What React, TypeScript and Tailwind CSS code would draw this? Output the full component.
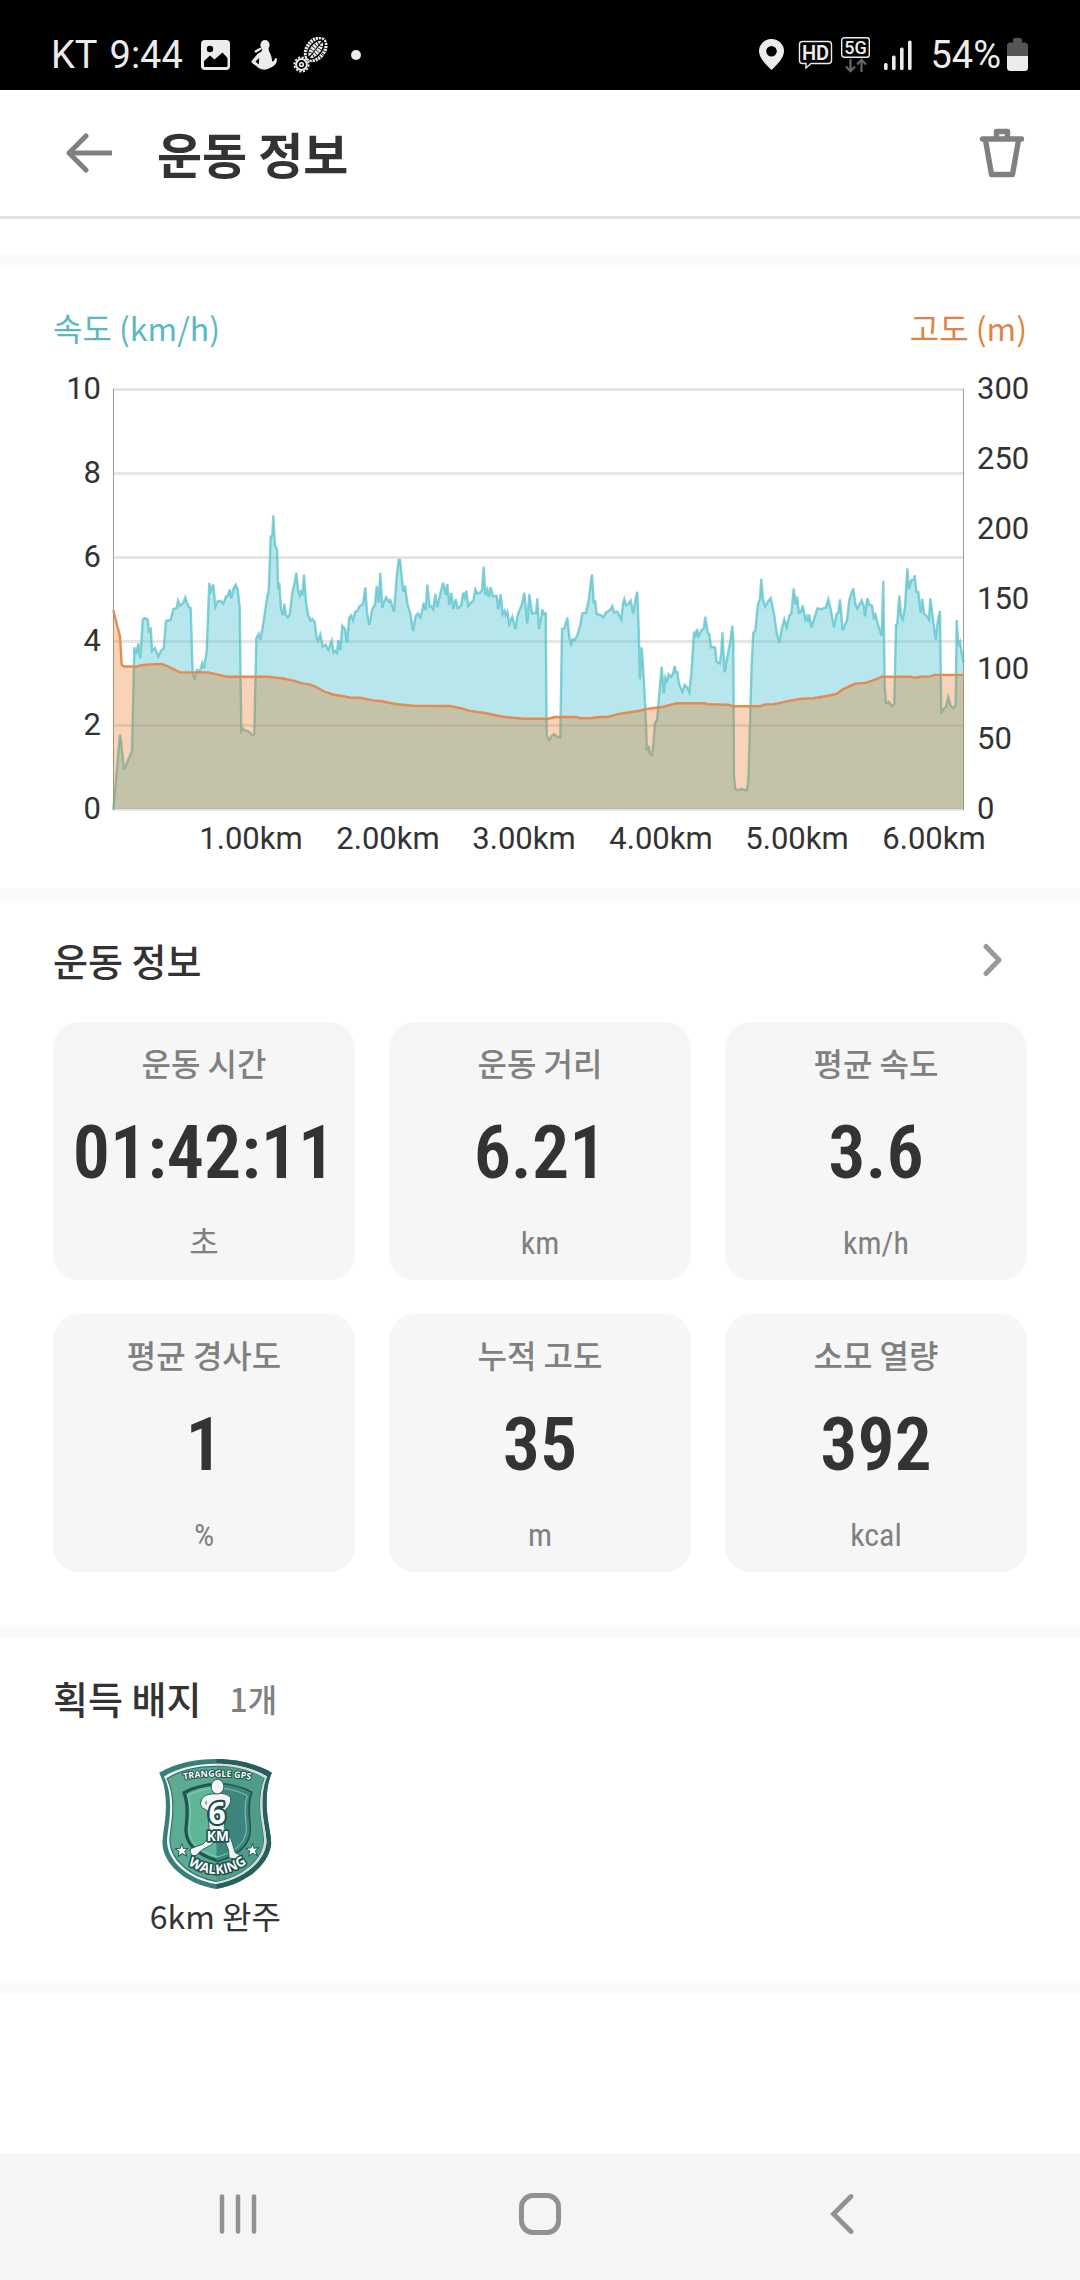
import React from "react";

type Run = { x: number; y: number; sx: number; sy: number; points: number[] };

const PLOT = { left: 113, right: 964, top: 389, bottom: 809 };

const speedRuns: Run[] = [
  {
    x: 40, y: 300, sx: 3, sy: 2.75,
    points: [
      220, 1402, 240, 1195, 244, 1220, 252, 1292, 276, 1240, 283, 955, 288, 975, 295, 945, 301, 985, 308, 880, 313, 875, 323, 878,
      327, 915, 332, 900, 336, 965, 345, 957, 355, 980, 362, 965, 371, 958, 378, 882, 392, 880, 400, 850, 410, 847, 414, 827,
      420, 840, 430, 833, 436, 818, 442, 835, 447, 845, 452, 847, 458, 1030, 464, 1040, 470, 1018, 480, 1020, 487, 998, 492, 1013,
      500, 965, 508, 778, 513, 800, 520, 782, 526, 843, 533, 828, 542, 827, 550, 835, 558, 815, 564, 812, 569, 796, 574, 820,
      580, 795, 587, 783, 593, 797, 599, 845, 604, 1185, 609, 1178, 614, 1184, 625, 1186, 638, 1197, 643, 1192, 649, 930, 656, 918,
      661, 935, 668, 900, 682, 815, 686, 800, 692, 650, 697, 648, 700, 592, 705, 675, 711, 685, 715, 795, 718, 778, 723, 850,
      729, 867, 733, 835, 738, 867, 743, 872, 749, 865, 757, 805, 765, 772, 769, 750, 775, 800, 779, 812, 784, 798, 787, 813,
      792, 755, 798, 830, 804, 865, 811, 882, 817, 877, 824, 885, 830, 930, 834, 936, 841, 920, 848, 953, 857, 948, 865, 962,
      875, 937, 881, 970, 887, 965, 891, 970, 895, 935, 901, 963, 907, 896, 915, 905, 921, 942, 928, 873, 934, 867, 939, 880,
      946, 857, 952, 855, 958, 843, 969, 835, 976, 790, 981, 860, 988, 893, 997, 850, 1005, 838, 1010, 786, 1016, 832,
    ],
  },
  {
    x: 380, y: 480, sx: 3, sy: 3,
    points: [
      1, 278, 7, 383, 14, 360, 19, 352, 26, 365, 31, 360, 42, 395, 50, 290, 56, 240, 60, 240, 70, 335, 75, 317, 82, 370, 92, 405,
      99, 453, 107, 408, 114, 400, 121, 412, 127, 390, 131, 368, 137, 390, 142, 314, 149, 380, 154, 378, 160, 388, 166, 342,
      172, 382, 182, 335, 190, 308, 197, 345, 202, 312, 208, 375, 214, 338, 220, 387, 227, 358, 233, 384, 243, 378, 250, 338,
      254, 352, 259, 332, 265, 378, 272, 368, 280, 363, 286, 328, 292, 340, 300, 338, 306, 330, 311, 260, 316, 345, 322, 328,
      326, 350, 332, 322, 338, 348, 350, 348, 355, 387, 362, 343, 368, 402, 374, 392, 377, 405, 382, 395, 388, 432, 397, 410,
      406, 447, 413, 405, 425, 375, 433, 338, 442, 430, 448, 342, 456, 400, 468, 398, 472, 355, 477, 447, 483, 415, 487, 388,
      491, 402, 497, 400, 500, 765, 508, 780, 515, 768, 522, 763, 530, 770, 541, 772, 546, 447, 553, 445, 562, 413, 568, 470,
      573, 492, 578, 478, 584, 480, 592, 465, 601, 435, 607, 400, 618, 398, 626, 360, 632, 310, 636, 283, 641, 370, 645, 360,
      650, 402, 662, 405, 670, 412, 677, 398, 690, 390, 697, 378, 702, 397, 712, 395, 724, 418, 729, 370, 733, 357, 738, 375,
      745, 372, 752, 362, 760, 400, 767, 355, 772, 335, 776, 450, 780, 598, 785, 502, 791, 590, 796, 680, 801, 812, 806, 797,
      810, 822, 816, 825, 820, 795, 825, 728, 831, 720, 838, 640, 845, 560, 851, 640, 856, 592, 861, 602, 866, 583, 873, 590,
      879, 582, 884, 558, 888, 577, 892, 577, 897, 612, 907, 635, 914, 615, 921, 622, 928, 637, 934, 580, 942, 455, 946, 473,
      951, 447, 956, 468, 965, 450, 971, 445, 976, 410, 983, 458, 988, 462, 993, 502, 1005, 502, 1010, 545, 1019, 550,
      1024, 520, 1027, 457, 1034, 577, 1042, 530, 1050, 490, 1057, 437, 1060, 480,
    ],
  },
  {
    x: 700, y: 300, sx: 3, sy: 2.75,
    points: [
      102, 1310, 106, 1345, 114, 1348, 122, 1345, 130, 1346, 140, 1348, 145, 1325, 155, 1000, 160, 915, 166, 910, 173, 840,
      180, 820, 184, 767, 189, 825, 196, 843, 203, 830, 212, 820, 222, 862, 230, 915, 238, 943, 245, 905, 253, 878, 260, 900,
      268, 868, 274, 862, 281, 793, 287, 838, 291, 815, 297, 860, 302, 858, 308, 840, 316, 878, 320, 870, 324, 885, 328, 865,
      334, 900, 342, 878, 352, 848, 365, 850, 378, 845, 385, 823, 392, 850, 402, 900, 410, 862, 415, 860, 420, 823, 428, 908,
      441, 880, 448, 825, 454, 808, 460, 793, 466, 835, 472, 848, 485, 826, 492, 843, 495, 870, 502, 820, 508, 838, 516, 840,
      522, 878, 525, 860, 532, 885, 538, 905, 545, 923, 550, 772, 554, 1060, 558, 1108, 567, 1105, 575, 1117, 583, 1112,
      588, 893, 592, 890, 598, 813, 603, 868, 608, 878, 615, 845, 622, 738, 627, 795, 634, 770, 641, 770, 644, 757, 649, 802,
      655, 803, 662, 860, 667, 822, 672, 862, 683, 872, 687, 878, 691, 820, 698, 870, 707, 935, 713, 885, 720, 855, 724, 1137,
      730, 1125, 738, 1118, 745, 1092, 752, 1115, 760, 1122, 767, 1115, 770, 880, 775, 952, 780, 940, 786, 975, 791, 998,
    ],
  },
];

const elevationRuns: Run[] = [
  {
    x: 40, y: 300, sx: 3, sy: 2.75,
    points: [
      220, 853, 240, 925, 245, 1003, 252, 1008, 290, 1008, 305, 1004, 330, 1002, 365, 1001, 385, 1008, 420, 1024, 505, 1024,
      560, 1036, 685, 1036, 730, 1041, 760, 1047, 790, 1055, 810, 1057, 830, 1065, 855, 1078, 880, 1085, 930, 1093, 960, 1094,
      1000, 1101,
    ],
  },
  {
    x: 380, y: 480, sx: 3, sy: 3,
    points: [
      0, 663, 50, 673, 100, 677, 210, 678, 245, 685, 275, 694, 310, 698, 370, 710, 430, 716, 505, 716, 525, 711, 590, 711,
      600, 715, 630, 715, 660, 711, 685, 710, 720, 701, 770, 694, 800, 687, 850, 680, 890, 670, 975, 670, 985, 673, 1045, 674,
    ],
  },
  {
    x: 700, y: 300, sx: 3, sy: 2.75,
    points: [
      100, 1117, 180, 1117, 195, 1112, 220, 1112, 270, 1102, 300, 1097, 340, 1095, 380, 1089, 410, 1083, 430, 1070, 465, 1055,
      495, 1053, 520, 1046, 545, 1036, 630, 1036, 645, 1039, 665, 1036, 690, 1035, 705, 1031, 792, 1031,
    ],
  },
];

function toLine(runs: Run[]) {
  const out: string[] = [];
  for (const r of runs) {
    for (let i = 0; i < r.points.length; i += 2) {
      out.push(`${(r.x + r.points[i] / r.sx).toFixed(1)} ${(r.y + r.points[i + 1] / r.sy).toFixed(1)}`);
    }
  }
  return "M" + out.join("L");
}

const speedLine = toLine(speedRuns);
const elevationLine = toLine(elevationRuns);
const closeArea = `L${PLOT.right} ${PLOT.bottom}L${PLOT.left} ${PLOT.bottom}Z`;

const speedTicks = [10, 8, 6, 4, 2, 0];
const elevationTicks = [300, 250, 200, 150, 100, 50, 0];
const distanceTicks = ["1.00km", "2.00km", "3.00km", "4.00km", "5.00km", "6.00km"];

function Chart() {
  return (
    <svg viewBox="0 354 1080 508" className="block w-full font-['Roboto',sans-serif]" role="img" aria-label="속도와 고도 그래프">
      {speedTicks.map((t) => (
        <rect key={t} x={PLOT.left} y={PLOT.bottom - t * 42 - 1} width={PLOT.right - PLOT.left} height="3" fill="#e5e5e5" />
      ))}
      <rect x="113" y="389" width="1" height="421" fill="#9c9c9c" />
      <rect x="963" y="389" width="1" height="421" fill="#9c9c9c" />
      <path d={speedLine + closeArea} fill="#5fcad5" fillOpacity=".45" />
      <path d={speedLine} fill="none" stroke="#4fbfc8" strokeOpacity=".7" strokeWidth="2.4" />
      <path d={elevationLine + closeArea} fill="#e86c12" fillOpacity=".3" />
      <path d={elevationLine} fill="none" stroke="#e5874a" strokeOpacity=".95" strokeWidth="2.4" />
      <g fill="#333333" fontSize="31">
        {speedTicks.map((t) => (
          <text key={t} x="101" y={PLOT.bottom - t * 42 + 10} textAnchor="end">{t}</text>
        ))}
        {elevationTicks.map((t) => (
          <text key={t} x="977" y={PLOT.bottom - (t / 50) * 70 + 10}>{t}</text>
        ))}
        {distanceTicks.map((t, i) => (
          <text key={t} x={251 + Math.round(i * 136.6)} y="849" textAnchor="middle">{t}</text>
        ))}
      </g>
    </svg>
  );
}

function StatusBar() {
  return (
    <div className="flex h-[90px] shrink-0 items-center justify-between bg-black pt-[19px] pr-[52px] pl-[51px] font-['Roboto',sans-serif] text-[38px] leading-none text-[#ececec]">
      <div className="flex items-center">
        <span className="mr-3">KT</span>
        <span className="mr-[18px]">9:44</span>
        <svg className="mr-5 h-[30px] w-[30px]" viewBox="0 0 30 30" aria-hidden="true">
          <rect x="0" y="0" width="29" height="30" rx="4" fill="#ececec" />
          <circle cx="9" cy="9" r="3.2" fill="#000" />
          <path d="M3 26V21L9 15.5L13.5 19.5L21.500 12.500L26.500 18V26Q26.500 27 25.500 27H4Q3 27 3 26Z" fill="#000" />
        </svg>
        <svg className="mr-4 h-[30px] w-[26px]" viewBox="0 0 26 30" fill="#ececec" aria-hidden="true">
          <ellipse cx="14" cy="5" rx="4.600" ry="5" />
          <path d="M3.500 11Q6 8.500 10 7.500L11 9L5 12.800Q3.500 12.800 3.500 11Z" />
          <path d="M11.500 8H17.500Q17.500 11 19 13Q21 17 21.200 21.500Q23.500 21 24 18.500Q25 17.500 26 19Q26 25 20 27.500Q14 31.500 7.500 28Q6 26 3 24.500Q0 23 0.500 21L7 13.500Q11.500 12 11.500 8Z" />
          <path d="M4.500 21.500L8.200 18L7.800 24.500Z" fill="#000" />
        </svg>
        <svg className="mr-[22px] h-9 w-9" viewBox="0 0 36 36" fill="none" stroke="#ececec" aria-hidden="true">
          <g transform="rotate(38 23 12)">
            <ellipse cx="23" cy="12.500" rx="10.500" ry="14" fill="#ececec" stroke="none" />
            <ellipse cx="23" cy="12.500" rx="6" ry="11" stroke="#000" strokeWidth="1.600" />
            <ellipse cx="23" cy="12.500" rx="9" ry="12.500" stroke="#000" strokeWidth="4" strokeDasharray=".8 2.200" />
            <ellipse cx="23" cy="12.500" rx="3" ry="8" stroke="#000" strokeWidth="4" strokeDasharray=".7 2.300" />
            <path d="M23 2V23" stroke="#000" strokeWidth="1" />
          </g>
          <circle cx="8.500" cy="27.500" r="5.400" fill="#000" strokeWidth="2" />
          <circle cx="8.500" cy="27.500" r="7.200" strokeWidth="1.800" strokeDasharray="2.200 1.570" />
          <circle cx="8.500" cy="27.500" r="2.600" fill="#ececec" stroke="none" />
          <circle cx="8.500" cy="27.500" r="1" fill="#000" stroke="none" />
        </svg>
        <span className="h-[10px] w-[10px] rounded-full bg-[#ececec]" />
      </div>
      <div className="flex items-center">
        <svg className="mr-3.5 h-[31px] w-[25px]" viewBox="0 0 25 31" aria-hidden="true">
          <path d="M12.500 0A12.300 12.300 0 0 1 25 12.300C25 19 18 26 12.500 31C7 26 0 19 0 12.300A12.300 12.300 0 0 1 12.500 0ZM12.500 7A5.300 5.300 0 1 0 12.500 17.600A5.300 5.300 0 1 0 12.500 7Z" fill="#ececec" />
        </svg>
        <svg className="mr-2 h-[30px] w-[35px]" viewBox="0 0 35 30" aria-hidden="true">
          <path d="M4.500 1.500H30.500Q33.500 1.500 33.500 4.500V20.500Q33.500 23.500 30.500 23.500H13L8 28V23.500H4.500Q1.500 23.500 1.500 20.500V4.500Q1.500 1.500 4.500 1.500Z" fill="none" stroke="#ececec" strokeWidth="1.400" />
          <text x="17.500" y="19.500" textAnchor="middle" fontSize="20" fontWeight="600" fill="#ececec">HD</text>
        </svg>
        <svg className="mr-3.5 h-[36px] w-[29px]" viewBox="0 0 29 36" aria-hidden="true">
          <rect x="0.700" y="0.700" width="27.600" height="19.600" rx="2.500" fill="none" stroke="#ececec" strokeWidth="1.400" />
          <text x="14.500" y="17" textAnchor="middle" fontSize="18" fontWeight="500" fill="#ececec">5G</text>
          <path d="M9.500 22V34M5 29.500L9.500 34.200L14 29.500M20.500 35V23M16 27.500L20.500 22.800L25 27.500" fill="none" stroke="#666" strokeWidth="2.200" />
        </svg>
        <svg className="mr-[18px] h-[30px] w-[28px]" viewBox="0 0 28 30" fill="#ececec" aria-hidden="true">
          <rect x="0" y="23" width="3.600" height="7" rx="1.500" />
          <rect x="8" y="15.500" width="3.600" height="14.500" rx="1.500" />
          <rect x="16" y="7.500" width="3.600" height="22.500" rx="1.500" />
          <rect x="24" y="0.500" width="3.600" height="29.500" rx="1.500" />
        </svg>
        <span className="mr-1.5">54%</span>
        <svg className="h-[33px] w-[21px]" viewBox="0 0 21 33" aria-hidden="true">
          <path d="M0 18V8Q0 4.500 3.500 4.500H6V2Q6 0 8 0H13Q15 0 15 2V4.500H17.500Q21 4.500 21 8V18Z" fill="#555" />
          <path d="M0 18H21V29.500Q21 33 17.500 33H3.500Q0 33 0 29.500Z" fill="#ececec" />
        </svg>
      </div>
    </div>
  );
}

function Badge() {
  return (
    <svg viewBox="80 57 338 390" className="h-[130px] w-[113px] font-['Open_Sans',sans-serif]" role="img" aria-label="TRANGGLE GPS 6KM WALKING">
      <defs>
        <path id="shield" d="M250 57C310 57 370 70 418 98C404 130 401 165 403 205C405 250 416 280 416 312C410 372 345 430 250 447C155 430 94 372 90 312C90 280 99 250 100 205C101 165 96 130 80 98C128 70 190 57 250 57Z" />
        <path id="inner-shield" d="M255 133C290 133 325 142 355 158C345 185 346 215 350 250C355 290 345 335 255 362C165 335 155 290 162 250C166 215 165 185 155 158C185 142 220 133 255 133Z" />
        <clipPath id="right-half"><rect x="252" y="50" width="180" height="400" /></clipPath>
        <path id="top-arc" d="M150 120Q254 100 358 120" />
        <path id="bottom-arc" d="M156 366Q254 440 354 362" />
      </defs>
      <use href="#shield" fill="#397f79" />
      <use href="#shield" fill="#265f5e" clipPath="url(#right-half)" />
      <g transform="translate(250 250) scale(.915 .925) translate(-250 -250)">
        <use href="#shield" fill="#f2f7f5" />
        <use href="#shield" fill="#d3dcda" clipPath="url(#right-half)" />
      </g>
      <g transform="translate(250 250) scale(.86 .885) translate(-250 -250)">
        <use href="#shield" fill="#5dac91" stroke="#2f6f6a" strokeWidth="4" />
        <use href="#shield" fill="#4f9d88" clipPath="url(#right-half)" />
      </g>
      <use href="#inner-shield" fill="#5fb697" stroke="#215552" strokeWidth="10" />
      <use href="#inner-shield" fill="#3d867d" clipPath="url(#right-half)" />
      <use href="#inner-shield" fill="none" stroke="#8ed0b6" strokeWidth="3" transform="translate(255 250) scale(.9) translate(-255 -250)" />
      <g fill="#f1f5f4" stroke="#2b625f" strokeWidth="3" strokeLinejoin="round">
        <path d="M236 162Q215 165 209 175L203 192Q205 204 224 212L230 262L226 296L212 312L174 326Q170 338 180 348L192 346Q200 332 236 315L258 284L276 300L288 330L290 354Q308 360 328 354L330 348L308 338L296 298L275 262L280 208Q298 190 294 172Q285 162 268 160Z" />
        <path d="M222 180L216 190L224 196Z" fill="#5fb697" stroke="none" />
        <ellipse cx="255" cy="140" rx="19" ry="22" />
      </g>
      <g fontWeight="700" fill="#fff" stroke="#1d4f4d" strokeLinejoin="round" paintOrder="stroke" textAnchor="middle">
        <text x="254" y="252" fontSize="90" strokeWidth="13">6</text>
        <text x="256" y="303" fontSize="41" strokeWidth="10">KM</text>
        <text fontSize="27" strokeWidth="6"><textPath href="#top-arc" startOffset="50%">TRANGGLE GPS</textPath></text>
        <text fontSize="40" strokeWidth="9"><textPath href="#bottom-arc" startOffset="50%">WALKING</textPath></text>
      </g>
      <g fill="#fff" stroke="#1d4f4d" strokeWidth="5" paintOrder="stroke">
        <path id="star" d="M148 316L152 327L163 326L155 334L160 345L149 339L139 346L141 334L132 327L144 326Z" />
        <use href="#star" transform="translate(212 -1)" />
      </g>
    </svg>
  );
}

const stats = [
  { label: "운동 시간", value: "01:42:11", unit: "초" },
  { label: "운동 거리", value: "6.21", unit: "km" },
  { label: "평균 속도", value: "3.6", unit: "km/h" },
  { label: "평균 경사도", value: "1", unit: "%" },
  { label: "누적 고도", value: "35", unit: "m" },
  { label: "소모 열량", value: "392", unit: "kcal" },
];

function Divider() {
  return <div className="h-[13px] shrink-0 bg-[#fafafa]" />;
}

export default function App() {
  return (
    <div className="flex min-h-screen flex-col bg-white font-['Noto_Sans_CJK_KR',sans-serif] text-[#333333]">
      <StatusBar />

      <header className="flex h-[129px] shrink-0 items-center border-b-[3px] border-[#e2e2e2] pr-[55px] pl-[66px]">
        <button type="button" aria-label="뒤로">
          <svg className="block h-[40px] w-[47px]" viewBox="0 0 47 40" fill="none" stroke="#808080" strokeWidth="5" strokeLinecap="round" strokeLinejoin="round">
            <path d="M20 3L3 20L20 37" />
            <path d="M3 20H46" strokeLinecap="butt" />
          </svg>
        </button>
        <h1 className="ml-11 flex-1 text-[49px] leading-[64px] font-bold">운동 정보</h1>
        <button type="button" aria-label="삭제">
          <svg className="block h-[50px] w-[46px]" viewBox="0 0 46 50" fill="none" stroke="#808080" strokeWidth="5.400" strokeLinecap="round" strokeLinejoin="round">
            <path d="M3.500 11H42.500M17.500 10V3.500H28.500V10M6.500 12L12.500 46.500H33.500L39.500 12" />
          </svg>
        </button>
      </header>

      <div className="h-[35px] shrink-0" />
      <Divider />

      <section className="pt-9 pb-[26px]">
        <div className="flex justify-between px-[53px] pb-[3px] text-[32px] leading-[48px]">
          <span className="text-[#5bb8c1]">속도 (km/h)</span>
          <span className="text-[#e08445]">고도 (m)</span>
        </div>
        <Chart />
      </section>
      <Divider />

      <section className="px-[53px] pt-[31px] pb-[53px]">
        <div className="flex items-center justify-between pr-[24px]">
          <h2 className="text-[38px] leading-[56px] font-medium">운동 정보</h2>
          <button type="button" aria-label="운동 정보 더보기">
            <svg className="block h-[34px] w-[21px]" viewBox="0 0 21 34" fill="none" stroke="#999999" strokeWidth="5" strokeLinecap="round" strokeLinejoin="round">
              <path d="M4 3.500L17 17L4 30.500" />
            </svg>
          </button>
        </div>
        <dl className="mt-[34px] grid grid-cols-3 gap-[34px]">
          {stats.map((s) => (
            <div key={s.label} className="flex flex-col items-center rounded-[26px] bg-[#f6f6f6] pt-5 pb-[17px] font-['Roboto_Condensed','Noto_Sans_CJK_KR',sans-serif] text-[32px] leading-[40px] text-[#808080]">
              <dt className="font-['Noto_Sans_CJK_KR',sans-serif] font-medium">{s.label}</dt>
              <dd className="mt-[35px] text-[74px] leading-[72px] font-semibold text-[#333333]">{s.value}</dd>
              <dd className="mt-[34px]">{s.unit}</dd>
            </div>
          ))}
        </dl>
      </section>
      <Divider />

      <section className="px-[53px] pt-8 pb-[42px]">
        <div className="flex items-center gap-7 leading-[56px] font-medium">
          <h2 className="text-[38px]">획득 배지</h2>
          <span className="text-[32px] text-[#808080]">1개</span>
        </div>
        <ul className="mt-[33px] grid grid-cols-3">
          <li className="flex flex-col items-center">
            <Badge />
            <span className="mt-0.5 text-[32px] leading-[48px]">6km 완주</span>
          </li>
        </ul>
      </section>
      <Divider />

      <div className="flex-1" />

      <nav className="flex h-[126px] shrink-0 items-center justify-center bg-[#f5f5f5] pb-[6px]">
        <button type="button" aria-label="최근 앱" className="flex w-[302px] justify-center">
          <svg className="h-[42px] w-[40px]" viewBox="0 0 40 42" stroke="#919191" strokeWidth="4.500" strokeLinecap="round">
            <path d="M4 3.500V38.500M20 3.500V38.500M36 3.500V38.500" />
          </svg>
        </button>
        <button type="button" aria-label="홈" className="flex w-[302px] justify-center">
          <svg className="h-[42px] w-[42px]" viewBox="0 0 42 42" fill="none" stroke="#919191" strokeWidth="5">
            <rect x="2.500" y="2.500" width="37" height="37" rx="11.500" />
          </svg>
        </button>
        <button type="button" aria-label="뒤로 가기" className="flex w-[302px] justify-center">
          <svg className="h-[42px] w-[24px]" viewBox="0 0 24 42" fill="none" stroke="#919191" strokeWidth="4.800" strokeLinecap="round" strokeLinejoin="miter">
            <path d="M21 3.500L3.500 21L21 38.500" />
          </svg>
        </button>
      </nav>
    </div>
  );
}
